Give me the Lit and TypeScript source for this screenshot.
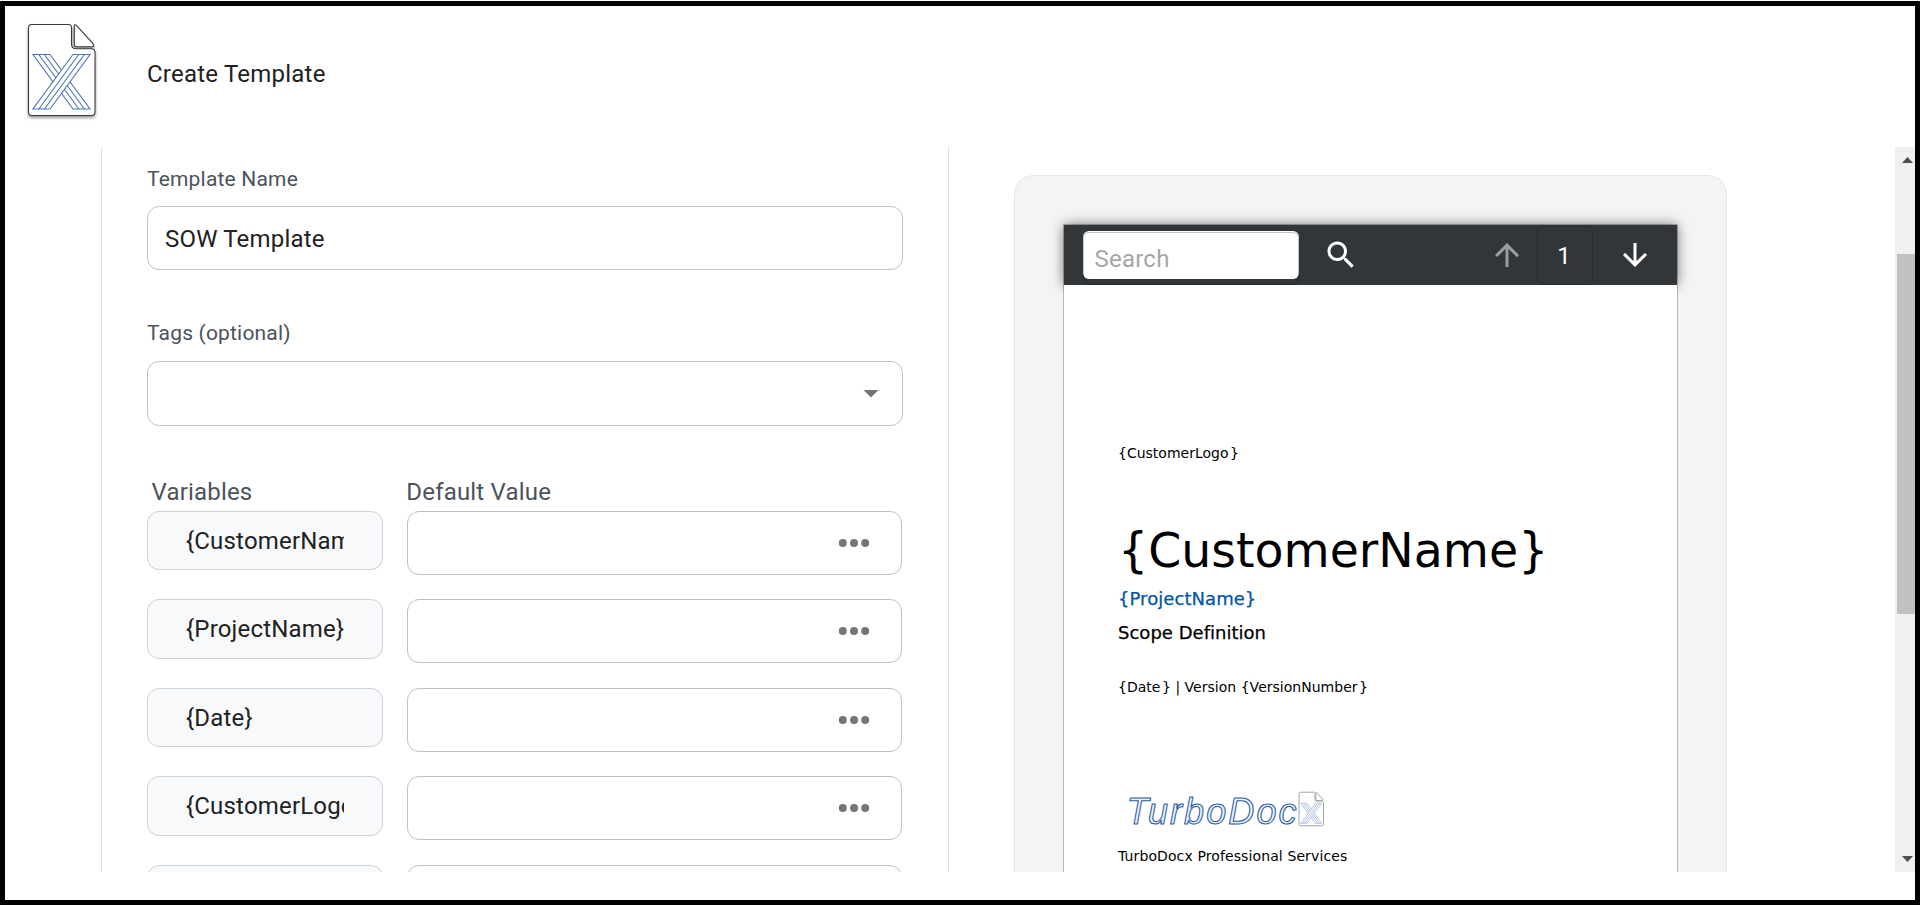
import { LitElement, html, css, svg } from "lit";
import { customElement } from "lit/decorators.js";

const BAND = [0, 5.8, 11.4, 17];

/* Page outline with a folded corner and the striped X. */
const docGlyph = (edge: string, stripe: string, w: number) => svg`
  <path d="M31.5 24.5H68.5Q71.5 24.5 71.5 27.5V44Q71.5 48.8 76 48.8H91.5Q95 48.8 95 52.5V112Q95 115.5 91.5 115.5H31.5Q28.5 115.5 28.5 112V28Q28.5 24.5 31.5 24.5Z" fill="#fff" stroke=${edge} stroke-width=${w}/>
  <path d="M74.3 26.6Q74.3 23.6 76.6 25.6L93 43.6Q95 46.8 91.6 46.8H76.4Q74.3 46.8 74.3 44.6Z" fill="#fff" stroke=${edge} stroke-width=${w}/>
  <path d="M33 54.5H50L90 109H73Z" fill="#fff" stroke=${stripe} stroke-width=${w}/>
  ${BAND.slice(1, 3).map((o) => svg`<path d="M${33 + o} 54.5L${73 + o} 109" fill="none" stroke=${stripe} stroke-width=${w}/>`)}
  <path d="M73 54.5H90L50 109H33Z" fill="#fff" stroke=${stripe} stroke-width=${w}/>
  ${BAND.slice(1, 3).map((o) => svg`<path d="M${73 + o} 54.5L${33 + o} 109" fill="none" stroke=${stripe} stroke-width=${w}/>`)}
`;

const icon = (d: string) => html`<svg class="icon" viewBox="0 0 24 24"><path d=${d} fill="currentColor"/></svg>`;

const SEARCH = "M15.5 14h-.79l-.28-.27C15.41 12.59 16 11.11 16 9.5 16 5.91 13.09 3 9.5 3S3 5.91 3 9.5 5.91 16 9.5 16c1.61 0 3.09-.59 4.23-1.57l.27.28v.79l5 4.99L20.49 19l-4.99-5zm-6 0C7.01 14 5 11.99 5 9.5S7.01 5 9.5 5 14 7.01 14 9.5 11.99 14 9.5 14z";
const UP = "M4 12l1.41 1.41L11 7.83V20h2V7.83l5.58 5.59L20 12l-8-8-8 8z";
const DOWN = "M20 12l-1.41-1.41L13 16.17V4h-2v12.17l-5.58-5.59L4 12l8 8 8-8z";
const CARET = "M7 10l5 5 5-5z";

@customElement("template-form")
class TemplateForm extends LitElement {
  private variables = ["{CustomerName}", "{ProjectName}", "{Date}", "{CustomerLogo}", "{VersionNumber}"];

  static styles = css`
    :host {
      display: block;
      box-sizing: border-box;
      flex: none;
      width: 848px;
      margin-left: 96px;
      padding: 17px 45px 0;
      border-left: 1px solid #e0e0e0;
      border-right: 1px solid #e0e0e0;
      overflow: hidden;
      letter-spacing: 0.0115em;
    }
    .label { font-size: 21px; line-height: 30px; color: #4b535c; }
    .box {
      box-sizing: border-box;
      display: flex;
      align-items: center;
      height: 64px;
      border: 1px solid #c1c1c1;
      border-radius: 12px;
      padding: 0 17px;
      background: #fff;
      color: #212121;
      font-size: 24px;
      line-height: 36px;
    }
    .name { margin: 12px 0 48px; padding-top: 2px; }
    .tags { margin: 13px 0 48px; height: 65px; justify-content: flex-end; padding: 0 13px 1px 0; color: #757575; }
    .icon { width: 36px; height: 36px; display: block; }
    .head, .row { display: grid; grid-template-columns: 236px 495px; column-gap: 24px; }
    .head { font-size: 24px; line-height: 36px; color: #4b535c; }
    .head .first { padding-left: 4.5px; }
    .head .second { margin-left: -0.7px; }
    .rows { display: grid; row-gap: 24.5px; margin-top: 0.75px; }
    .row { height: 64px; }
    .var {
      box-sizing: border-box;
      height: 59.5px;
      border: 1px solid #cbd2db;
      border-radius: 12px;
      background: #f8f9fb;
      padding: 11px 38px 0;
      font-size: 24px;
      line-height: 36px;
      color: #212121;
    }
    .clip { display: block; overflow: hidden; white-space: nowrap; }
    .value { justify-content: flex-end; padding-right: 31px; }
    .dots { width: 32px; height: 10px; }
  `;

  render() {
    return html`
      <div class="label">Template Name</div>
      <div class="box name">SOW Template</div>
      <div class="label">Tags (optional)</div>
      <div class="box tags">${icon(CARET)}</div>
      <div class="head"><span class="first">Variables</span><span class="second">Default Value</span></div>
      <div class="rows">
        ${this.variables.map((v) => html`
          <div class="row">
            <div class="var"><span class="clip">${v}</span></div>
            <div class="box value">
              <svg class="dots" viewBox="0 0 32 10" fill="#757575">
                <circle cx="4.8" cy="5" r="4"/><circle cx="16" cy="5" r="4"/><circle cx="27.2" cy="5" r="4"/>
              </svg>
            </div>
          </div>`)}
      </div>
    `;
  }
}

@customElement("document-preview")
class DocumentPreview extends LitElement {
  static styles = css`
    :host {
      display: block;
      box-sizing: border-box;
      flex: none;
      width: 713px;
      height: 720px;
      margin: 28px 0 0 65px;
      padding: 48px 48px 0;
      border: 1px solid #e6e6e6;
      border-bottom: 0;
      border-radius: 20px 20px 0 0;
      background: #f4f4f4;
    }
    .viewer { border: 1px solid #b8b8b8; border-bottom: 0; height: 670px; }
    .toolbar {
      box-sizing: border-box;
      display: flex;
      height: 60px;
      padding: 0 24px 0 19px;
      background: #323639;
      box-shadow: 0 0 12px rgba(0, 0, 0, 0.55);
      color: #fff;
      font-size: 24px;
    }
    .search { position: relative; width: 216px; height: 48px; margin-top: 6px; background: #fff; border-radius: 6px; }
    .search::after {
      content: "";
      position: absolute;
      inset: 1px 0 -6px;
      border: 1px solid rgba(0, 0, 0, 0.23);
      border-radius: 6px;
    }
    .hint { display: block; padding: 10px 0 0 11.5px; line-height: 36px; color: #a6a6a6; letter-spacing: 0.00938em; }
    .icon { display: block; width: 36px; height: 36px; margin-top: 12px; }
    .find { margin: -0.5px auto 0 23.5px; }
    .up { color: #9c9d9e; margin-right: 12px; }
    .number {
      box-sizing: border-box;
      width: 56px;
      height: 59px;
      margin: 1px 24px 0 0;
      padding-right: 2px;
      border: 1px solid #272a2c;
      border-radius: 6px;
      text-align: center;
      line-height: 59px;
    }
    .page {
      position: relative;
      height: 609px;
      padding: 158px 0 0 54px;
      box-sizing: border-box;
      background: #fff;
      font-family: "DejaVu Sans", sans-serif;
      color: #000;
      white-space: nowrap;
    }
    .small { font-size: 14px; line-height: 20px; }
    .gap { margin-left: 1.5px; }
    .customer { font-size: 47.4px; line-height: 56px; margin-top: 60px; }
    .mid { font-size: 18px; line-height: 24px; -webkit-text-stroke: 0.25px currentColor; }
    .project { color: #0055a5; margin-top: 8px; letter-spacing: 0.06px; }
    .scope { margin-top: 10px; letter-spacing: 0.02px; }
    .date { margin-top: 32px; letter-spacing: 0.02px; }
    .brand { display: block; width: 220px; height: 45px; margin: 88px 0 16px; }
    .services { letter-spacing: 0.11px; }
  `;

  render() {
    return html`
      <div class="viewer">
        <div class="toolbar">
          <div class="search"><span class="hint">Search</span></div>
          <div class="find">${icon(SEARCH)}</div>
          <div class="up">${icon(UP)}</div>
          <div class="number">1</div>
          <div>${icon(DOWN)}</div>
        </div>
        <div class="page">
          <div class="small">{CustomerLogo<span class="gap">}</span></div>
          <div class="customer">{CustomerName}</div>
          <div class="mid project">{ProjectName}</div>
          <div class="mid scope">Scope Definition</div>
          <div class="small date">{Date<span class="gap">}</span> | Version {VersionNumber<span class="gap">}</span></div>
          <svg class="brand" viewBox="0 0 220 45">
            <text x="8.5" y="39.3" font-family="Liberation Sans" font-style="italic" font-size="36" textLength="170" lengthAdjust="spacing" fill="#eaf1fb" stroke="#2b5aa4" stroke-width="1.05" stroke-linejoin="round">TurboDoc</text>
            <g transform="translate(170.6 -1.8) scale(.368)">${docGlyph("#a0a0a0", "#b4c3de", 2.6)}</g>
          </svg>
          <div class="small services">TurboDocx Professional Services</div>
        </div>
      </div>
    `;
  }
}

@customElement("app-root")
class AppRoot extends LitElement {
  static styles = css`
    :host {
      display: block;
      box-sizing: border-box;
      height: 905px;
      padding-top: 1px;
      background: #fff;
      font-family: Roboto, sans-serif;
    }
    .frame { box-sizing: border-box; height: 904px; border: 5px solid #000; overflow: hidden; }
    .header { display: flex; height: 141px; }
    .logo { width: 142px; height: 141px; filter: drop-shadow(0 2px 1.5px rgba(0, 0, 0, 0.4)); }
    .title { padding-top: 50px; font-size: 24px; line-height: 36px; color: #212121; letter-spacing: 0.00938em; }
    .body { display: flex; height: 725px; overflow: hidden; }
    .scroll {
      box-sizing: border-box;
      display: flex;
      flex-direction: column;
      flex: none;
      width: 20px;
      margin-left: auto;
      padding: 10px 0 10px 2px;
      background: #f0f0f0;
    }
    .arrow { width: 11px; height: 6px; margin-left: 5px; }
    .thumb { height: 360px; margin: 91px 0 auto; background: #c1c1c1; }
  `;

  render() {
    return html`
      <div class="frame">
        <div class="header">
          <svg class="logo" viewBox="5 6 142 141">${docGlyph("#3c3c3c", "#4a74b8", 1.1)}</svg>
          <div class="title">Create Template</div>
        </div>
        <div class="body">
          <template-form></template-form>
          <document-preview></document-preview>
          <div class="scroll">
            <svg class="arrow" viewBox="0 0 11 6"><path d="M0 6L5.5 0L11 6Z" fill="#505050"/></svg>
            <div class="thumb"></div>
            <svg class="arrow" viewBox="0 0 11 6"><path d="M0 0L5.5 6L11 0Z" fill="#505050"/></svg>
          </div>
        </div>
      </div>
    `;
  }
}
